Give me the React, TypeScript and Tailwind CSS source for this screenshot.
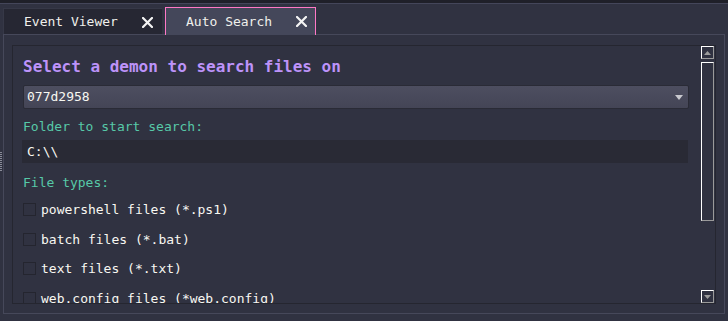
import type { FC } from "react";

const mono = { fontFamily: '"DejaVu Sans Mono", "Liberation Mono", monospace' };

const CloseIcon: FC = () => (
  <svg width="11" height="11" viewBox="0 0 11 11" className="shrink-0">
    <path d="M1 1 L10 10 M10 1 L1 10" stroke="#f4f4f4" strokeWidth="2.2" strokeLinecap="square" />
  </svg>
);

const TabLabel: FC<{ label: string }> = ({ label }) => (
  <>
    <span>{label}</span>
    <CloseIcon />
  </>
);

const ScrollArrow: FC<{ down?: boolean }> = ({ down }) => (
  <div className="flex h-[13px] w-[13px] shrink-0 items-center justify-center border-l border-t border-r border-b border-l-white border-t-white border-r-[#9a9a9a] border-b-[#9a9a9a]">
    <svg width="7" height="4" viewBox="0 0 7 4">
      <path d={down ? "M0 0 H7 L3.5 4 Z" : "M3.5 0 L7 4 H0 Z"} fill="#9b9b9b" />
    </svg>
  </div>
);

const fileTypes = [
  "powershell files (*.ps1)",
  "batch files (*.bat)",
  "text files (*.txt)",
  "web.config files (*web.config)",
];

export default function App() {
  return (
    <div className="h-[321px] w-[728px] overflow-hidden bg-[#303241]" style={mono}>
      <div className="h-[3px] bg-[#1f2029]" />
      <div className="h-px bg-[#44465a]" />

      {/* tabs */}
      <div className="flex h-[31px] items-end gap-[3px] pl-[3px] text-[13px] text-[#f0f0ec]">
        <div className="flex h-[27px] w-[159px] items-center justify-between border-l border-t border-[#363847] bg-[#262733] pl-[20px] pr-[9px]">
          <TabLabel label="Event Viewer" />
        </div>
        <div className="relative z-10 h-[28px] w-[151px] border-x border-t border-[#ff79c6] bg-[#44475a]">
          <div className="flex h-full items-center justify-between pl-[20px] pr-[8px]">
            <TabLabel label="Auto Search" />
          </div>
        </div>
      </div>

      <div className="-mt-px flex">
        {/* splitter handle */}
        <div className="flex w-[3px] flex-col pt-[118px]">
          <div className="h-[20px] w-[2px] bg-[repeating-linear-gradient(to_bottom,#8a8c99_0px,#8a8c99_1px,transparent_1px,transparent_2px)]" />
        </div>

        {/* outer frame */}
        <div className="h-[280px] w-[722px] border border-[#46485a] pb-[9px] pl-[8px] pr-[8px] pt-[10px]">
          <div className="flex h-full border border-[#252630]">
            {/* content */}
            <div className="flex min-w-0 flex-1 flex-col overflow-hidden pl-[10px] pr-[12px] pt-[11px]">
              <div className="h-[20px] shrink-0 text-[16px] font-bold leading-[20px] text-[#bd93f9]">
                Select a demon to search files on
              </div>

              <div className="mt-[8px] flex h-[24px] shrink-0 items-center justify-between rounded-[2px] border border-[#2a2b36] bg-[linear-gradient(to_bottom,#4d4e60,#444556)] pl-[3px] pr-[5px] text-[13px] text-[#f8f8f2]">
                <span>077d2958</span>
                <svg width="8" height="5" viewBox="0 0 8 5">
                  <path d="M0 0 H8 L4 5 Z" fill="#c9c9cf" />
                </svg>
              </div>

              <div className="mt-[9px] h-[17px] shrink-0 text-[13px] leading-[17px] text-[#57c9a8]">
                Folder to start search:
              </div>

              <div className="-ml-px mr-px mt-[5px] flex h-[23px] shrink-0 items-center bg-[#292a35] pl-[5px] text-[13px] text-[#f8f8f2]">
                C:\\
              </div>

              <div className="mt-[11px] h-[17px] shrink-0 text-[13px] leading-[17px] text-[#57c9a8]">
                File types:
              </div>

              <div className="mt-[4px] flex shrink-0 flex-col">
                {fileTypes.map((t) => (
                  <div key={t} className="flex h-[29.5px] shrink-0 items-center">
                    <div className="h-[13px] w-[13px] shrink-0 border border-[#24252f]" />
                    <span className="ml-[5px] whitespace-nowrap text-[13px] text-[#f8f8f2]">{t}</span>
                  </div>
                ))}
              </div>
            </div>

            {/* scrollbar */}
            <div className="flex w-[14px] shrink-0 flex-col pr-px">
              <ScrollArrow />
              <div className="mt-[3px] h-[159px] shrink-0 border-l border-t border-r border-b border-l-white border-t-white border-r-[#9a9a9a] border-b-[#9a9a9a]" />
              <div className="flex-1" />
              <ScrollArrow down />
            </div>
          </div>
        </div>
      </div>
    </div>
  );
}
